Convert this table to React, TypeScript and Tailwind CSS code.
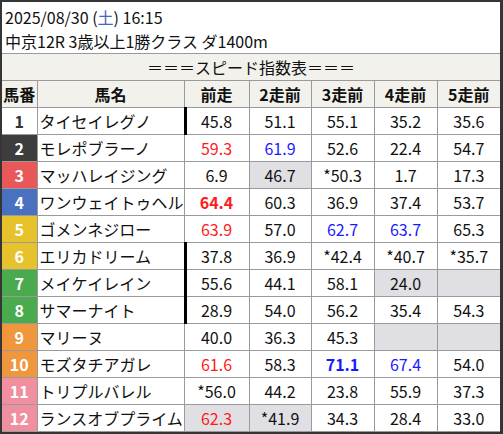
import React from 'react'

type Cell = { v: string; c?: 'r' | 'b'; bold?: boolean; gray?: boolean }

type Row = {
  no: number
  name: string
  waku: string
  numColor: string
  thick?: boolean
  cells: Cell[]
}

const rows: Row[] = [
  { no: 1, name: 'タイセイレグノ', waku: 'bg-white', numColor: 'text-[#333]', thick: true, cells: [{ v: '45.8' }, { v: '51.1' }, { v: '55.1' }, { v: '35.2' }, { v: '35.6' }] },
  { no: 2, name: 'モレポブラーノ', waku: 'bg-[#3d3d3d]', numColor: 'text-white', cells: [{ v: '59.3', c: 'r' }, { v: '61.9', c: 'b' }, { v: '52.6' }, { v: '22.4' }, { v: '54.7' }] },
  { no: 3, name: 'マッハレイジング', waku: 'bg-[#e85858]', numColor: 'text-white', cells: [{ v: '6.9' }, { v: '46.7', gray: true }, { v: '*50.3' }, { v: '1.7' }, { v: '17.3' }] },
  { no: 4, name: 'ワンウェイトゥヘル', waku: 'bg-[#4a70c0]', numColor: 'text-white', cells: [{ v: '64.4', c: 'r', bold: true }, { v: '60.3' }, { v: '36.9' }, { v: '37.4' }, { v: '53.7' }] },
  { no: 5, name: 'ゴメンネジロー', waku: 'bg-[#e6c22c]', numColor: 'text-white', cells: [{ v: '63.9', c: 'r' }, { v: '57.0' }, { v: '62.7', c: 'b' }, { v: '63.7', c: 'b' }, { v: '65.3' }] },
  { no: 6, name: 'エリカドリーム', waku: 'bg-[#e6c22c]', numColor: 'text-white', thick: true, cells: [{ v: '37.8' }, { v: '36.9' }, { v: '*42.4' }, { v: '*40.7' }, { v: '*35.7' }] },
  { no: 7, name: 'メイケイレイン', waku: 'bg-[#4aab4e]', numColor: 'text-white', thick: true, cells: [{ v: '55.6' }, { v: '44.1' }, { v: '58.1' }, { v: '24.0', gray: true }, { v: '', gray: true }] },
  { no: 8, name: 'サマーナイト', waku: 'bg-[#4aab4e]', numColor: 'text-white', thick: true, cells: [{ v: '28.9' }, { v: '54.0' }, { v: '56.2' }, { v: '35.4' }, { v: '54.3' }] },
  { no: 9, name: 'マリーヌ', waku: 'bg-[#f0963c]', numColor: 'text-white', cells: [{ v: '40.0' }, { v: '36.3' }, { v: '45.3' }, { v: '', gray: true }, { v: '', gray: true }] },
  { no: 10, name: 'モズタチアガレ', waku: 'bg-[#f0963c]', numColor: 'text-white', cells: [{ v: '61.6', c: 'r' }, { v: '58.3' }, { v: '71.1', c: 'b', bold: true }, { v: '67.4', c: 'b' }, { v: '54.0' }] },
  { no: 11, name: 'トリプルバレル', waku: 'bg-[#f08fa0]', numColor: 'text-white', cells: [{ v: '*56.0' }, { v: '44.2' }, { v: '23.8' }, { v: '55.9' }, { v: '37.3' }] },
  { no: 12, name: 'ランスオブプライム', waku: 'bg-[#f08fa0]', numColor: 'text-white', cells: [{ v: '62.3', c: 'r', gray: true }, { v: '*41.9', gray: true }, { v: '34.3' }, { v: '28.4' }, { v: '33.0' }] },
]

const heads = ['前走', '2走前', '3走前', '4走前', '5走前']

export default function App() {
  return (
    <div
      className="w-[503px] h-[434px] bg-[#353535] pt-[2px] pl-[2px] overflow-hidden"
      style={{ fontFamily: '"Noto Sans CJK JP", "Noto Sans", sans-serif' }}
    >
      <div className="w-[498px] bg-white text-[16px] text-[#111]">
        {/* Race info */}
        <div className="pl-[3px] pt-[3px] leading-[24px]">
          <div>
            2025/08/30 (<span className="text-[#4466bb]">土</span>) 16:15
          </div>
          <div>中京12R 3歳以上1勝クラス ダ1400m</div>
        </div>

        <table className="w-[498px] table-fixed border-collapse leading-none">
          <colgroup>
            <col className="w-[35px]" />
            <col className="w-[147px]" />
            <col className="w-[65px]" />
            <col className="w-[62px]" />
            <col className="w-[63px]" />
            <col className="w-[63px]" />
            <col className="w-[63px]" />
          </colgroup>
          <thead>
            <tr>
              <td colSpan={7} className="h-[27px] bg-[#f2f1ec] border-y border-[#9a9a9a] text-center">
                ＝＝＝スピード指数表＝＝＝
              </td>
            </tr>
            <tr className="bg-[#f2f1ec] font-bold">
              <td className="h-[27px] border border-l-0 border-[#9a9a9a] text-center">馬番</td>
              <td className="border border-[#9a9a9a] text-center">馬名</td>
              {heads.map((h) => (
                <td key={h} className="border border-[#9a9a9a] text-center last:border-r-0">
                  {h}
                </td>
              ))}
            </tr>
          </thead>
          <tbody>
            {rows.map((r) => (
              <tr key={r.no}>
                <td className={`h-[27px] border border-l-0 border-[#9a9a9a] text-center font-bold ${r.waku} ${r.numColor}`}>
                  {r.no}
                </td>
                <td className="border border-[#9a9a9a] pl-[2px] whitespace-nowrap overflow-hidden">{r.name}</td>
                {r.cells.map((c, i) => (
                  <td
                    key={i}
                    className={[
                      'border border-[#9a9a9a] text-center last:border-r-0',
                      c.gray ? 'bg-[#e0e0e4]' : '',
                      c.c === 'r' ? 'text-[#ff1a1a]' : c.c === 'b' ? 'text-[#1a1aff]' : '',
                      c.bold ? 'font-bold' : '',
                      i === 0 && r.thick
                        ? 'relative before:absolute before:left-[-1px] before:top-[-1px] before:bottom-[-1px] before:w-[3px] before:bg-black'
                        : '',
                    ].join(' ')}
                  >
                    {c.v}
                  </td>
                ))}
              </tr>
            ))}
          </tbody>
        </table>
      </div>
    </div>
  )
}
